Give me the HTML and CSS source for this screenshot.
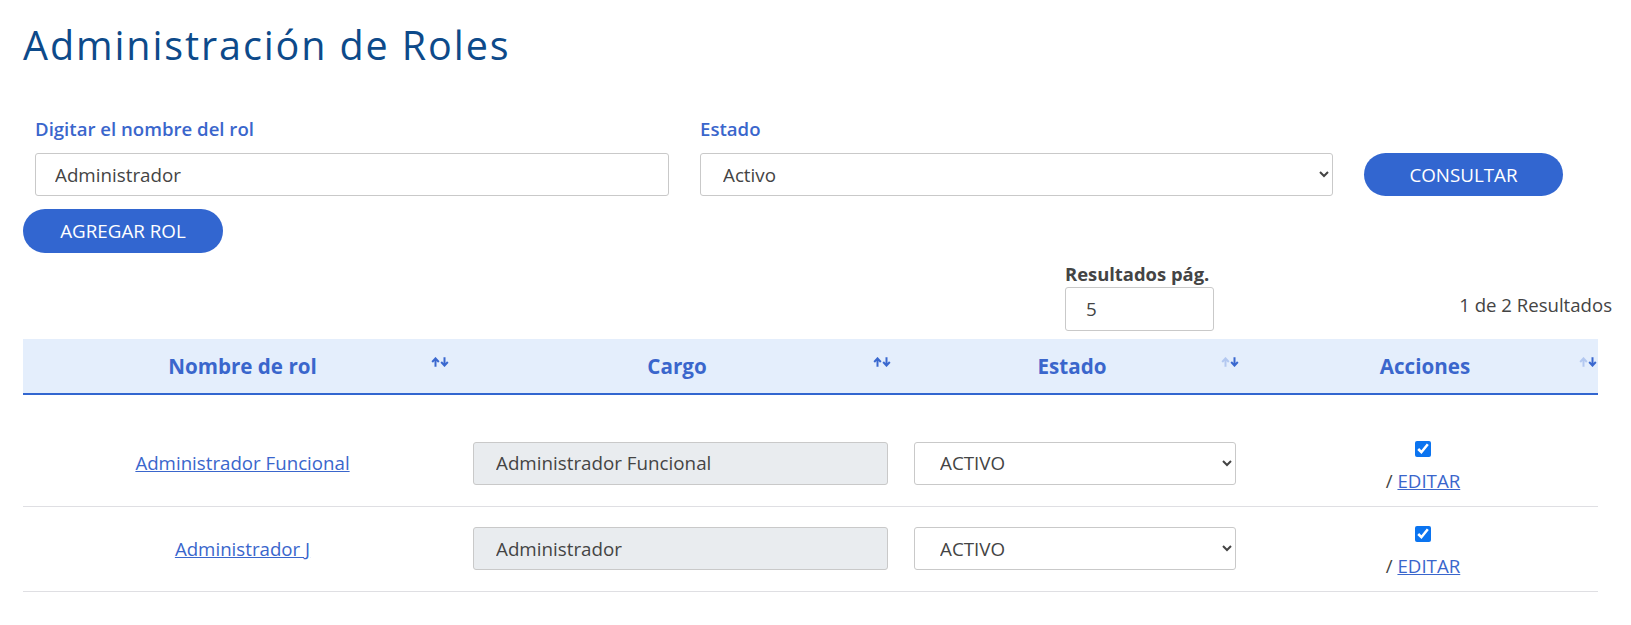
FILE: index.html
```html
<!DOCTYPE html>
<html lang="es">
<head>
<meta charset="utf-8">
<title>Administración de Roles</title>
<link rel="stylesheet" href="styles.css">
</head>
<body>
<main class="page">
  <h1 class="title">Administración de Roles</h1>

  <form class="filters">
    <div class="field field-name">
      <label class="field-label" for="rol">Digitar el nombre del rol</label>
      <input id="rol" class="control" type="text" value="Administrador">
    </div>
    <div class="field field-state">
      <label class="field-label" for="estado">Estado</label>
      <select id="estado" class="control select">
        <option>Activo</option>
      </select>
    </div>
    <div class="field field-btn">
      <button type="button" class="btn btn-consultar">CONSULTAR</button>
    </div>
  </form>

  <button type="button" class="btn btn-add">AGREGAR ROL</button>

  <div class="pager">
    <div class="per-page">
      <label class="per-page-label" for="pp">Resultados pág.</label>
      <input id="pp" class="control per-page-input" type="text" value="5">
    </div>
    <div class="count">1 de 2 Resultados</div>
  </div>

  <table class="roles">
    <colgroup>
      <col class="c1"><col class="c2"><col class="c3"><col class="c4">
    </colgroup>
    <thead>
      <tr>
        <th>Nombre de rol<span class="sort"><svg width="18" height="10" viewBox="0 0 18 10"><path d="M4.5 9.8V1.6M1.2 5L4.5 1.4 7.8 5" stroke="#3a68cf" stroke-width="2" fill="none"/><path d="M13.5 0.2V8.4M10.2 5l3.3 3.6L16.8 5" stroke="#3a68cf" stroke-width="2" fill="none"/></svg></span></th>
        <th>Cargo<span class="sort"><svg width="18" height="10" viewBox="0 0 18 10"><path d="M4.5 9.8V1.6M1.2 5L4.5 1.4 7.8 5" stroke="#3a68cf" stroke-width="2" fill="none"/><path d="M13.5 0.2V8.4M10.2 5l3.3 3.6L16.8 5" stroke="#3a68cf" stroke-width="2" fill="none"/></svg></span></th>
        <th>Estado<span class="sort"><svg width="18" height="10" viewBox="0 0 18 10"><path d="M4.5 9.8V1.6M1.2 5L4.5 1.4 7.8 5" stroke="#b3c8f0" stroke-width="2" fill="none"/><path d="M13.5 0.2V8.4M10.2 5l3.3 3.6L16.8 5" stroke="#3a68cf" stroke-width="2" fill="none"/></svg></span></th>
        <th>Acciones<span class="sort"><svg width="18" height="10" viewBox="0 0 18 10"><path d="M4.5 9.8V1.6M1.2 5L4.5 1.4 7.8 5" stroke="#b3c8f0" stroke-width="2" fill="none"/><path d="M13.5 0.2V8.4M10.2 5l3.3 3.6L16.8 5" stroke="#3a68cf" stroke-width="2" fill="none"/></svg></span></th>
      </tr>
    </thead>
    <tbody>
      <tr class="spacer"><td colspan="4"></td></tr>
      <tr class="row">
        <td class="cell-name"><a href="#" class="link">Administrador Funcional</a></td>
        <td class="cell-cargo"><input class="control disabled" type="text" value="Administrador Funcional" disabled></td>
        <td class="cell-estado"><select class="control select row-select"><option>ACTIVO</option></select></td>
        <td class="cell-actions"><input type="checkbox" class="check" checked><div class="edit">/ <a href="#" class="link">EDITAR</a></div></td>
      </tr>
      <tr class="row">
        <td class="cell-name"><a href="#" class="link">Administrador J</a></td>
        <td class="cell-cargo"><input class="control disabled" type="text" value="Administrador" disabled></td>
        <td class="cell-estado"><select class="control select row-select"><option>ACTIVO</option></select></td>
        <td class="cell-actions"><input type="checkbox" class="check" checked><div class="edit">/ <a href="#" class="link">EDITAR</a></div></td>
      </tr>
    </tbody>
  </table>
</main>
</body>
</html>
```

FILE: styles.css
```css
* { box-sizing: border-box; }

body {
  margin: 0;
  background: #ffffff;
  font-family: "Open Sans", "Noto Sans", sans-serif;
  font-size: 19px;
  color: #444;
}

.page {
  padding: 0 33px 0 23px;
}

.title {
  margin: 0;
  padding-top: 19px;
  height: 118px;
  font-family: "Open Sans", sans-serif;
  font-weight: 400;
  font-size: 39.5px;
  line-height: 52px;
  color: #0d4a8a;
  letter-spacing: 1.9px;
}

.filters {
  display: flex;
  align-items: flex-end;
  padding-left: 12px;
}

.field {
  display: flex;
  flex-direction: column;
}

.field-name { width: 634px; }
.field-state { width: 633px; margin-left: 31px; }
.field-btn { margin-left: 31px; }

.field-label {
  font-weight: 600;
  color: #3a66cc;
  font-size: 18.6px;
  line-height: 22px;
  margin-bottom: 13px;
}

.control {
  height: 43px;
  border: 1px solid #c9c9c9;
  border-radius: 3px;
  background: #fff;
  font-family: "Open Sans", sans-serif;
  font-size: 18.8px;
  color: #444;
  padding: 0 19px;
  width: 100%;
}

.select {
  padding-left: 18px;
}

.btn {
  border: none;
  background: #3266d0;
  color: #fff;
  font-family: "Open Sans", sans-serif;
  font-size: 18.8px;
  height: 43px;
  border-radius: 22px;
  cursor: pointer;
  padding: 0;
}

.btn-consultar { width: 199px; }

.btn-add {
  display: block;
  width: 200px;
  height: 44px;
  margin-top: 13px;
}

.pager {
  display: grid;
  grid-template-columns: 1042px 149px 1fr;
  align-items: end;
  margin-top: 10px;
  margin-right: -14px;
}

.per-page {
  grid-column: 2;
  display: flex;
  flex-direction: column;
}

.per-page-label {
  font-weight: 700;
  font-size: 18.4px;
  color: #444;
  line-height: 22px;
  margin-bottom: 2px;
  white-space: nowrap;
}

.per-page-input {
  height: 44px;
  padding-left: 20px;
}

.count {
  grid-column: 3;
  justify-self: end;
  margin-bottom: 14px;
  font-size: 18.6px;
  color: #444;
  white-space: nowrap;
}

.roles {
  width: 1575px;
  border-collapse: collapse;
  table-layout: fixed;
  margin-top: 8px;
}

.c1 { width: 427px; }
.c2 { width: 442px; }
.c3 { width: 348px; }
.c4 { width: 358px; }

.roles th {
  position: relative;
  height: 55px;
  background: #e4eefc;
  border-bottom: 2px solid #3266d0;
  color: #3a66cc;
  font-weight: 700;
  font-size: 20.6px;
  text-align: center;
  padding: 0 0 0 12px;
}

.sort {
  position: absolute;
  right: 1px;
  top: 18px;
  line-height: 0;
}

.spacer td {
  height: 27px;
  padding: 0;
}

.row td {
  height: 85px;
  border-bottom: 1px solid #dfdfe3;
  vertical-align: middle;
  padding: 0;
}

.cell-name {
  text-align: center;
  padding-left: 12px !important;
}

.link {
  color: #3a66cc;
  text-decoration: underline;
  font-size: 18.7px;
}

.cell-cargo {
  padding-left: 23px !important;
  padding-right: 4px !important;
}

.disabled {
  background: #e9ecef;
  color: #444;
  padding-left: 22px;
}

.cell-estado {
  padding-left: 22px !important;
  padding-right: 4px !important;
}

.row-select {
  padding-left: 21px;
}

.cell-actions {
  text-align: center;
  padding-left: 8px !important;
  padding-top: 8px !important;
}

.check {
  width: 16px;
  height: 16px;
  accent-color: #0b74f0;
  display: block;
  margin: 0 auto 11px;
}

.edit {
  font-size: 18.7px;
  line-height: 26px;
  color: #444;
}
```
